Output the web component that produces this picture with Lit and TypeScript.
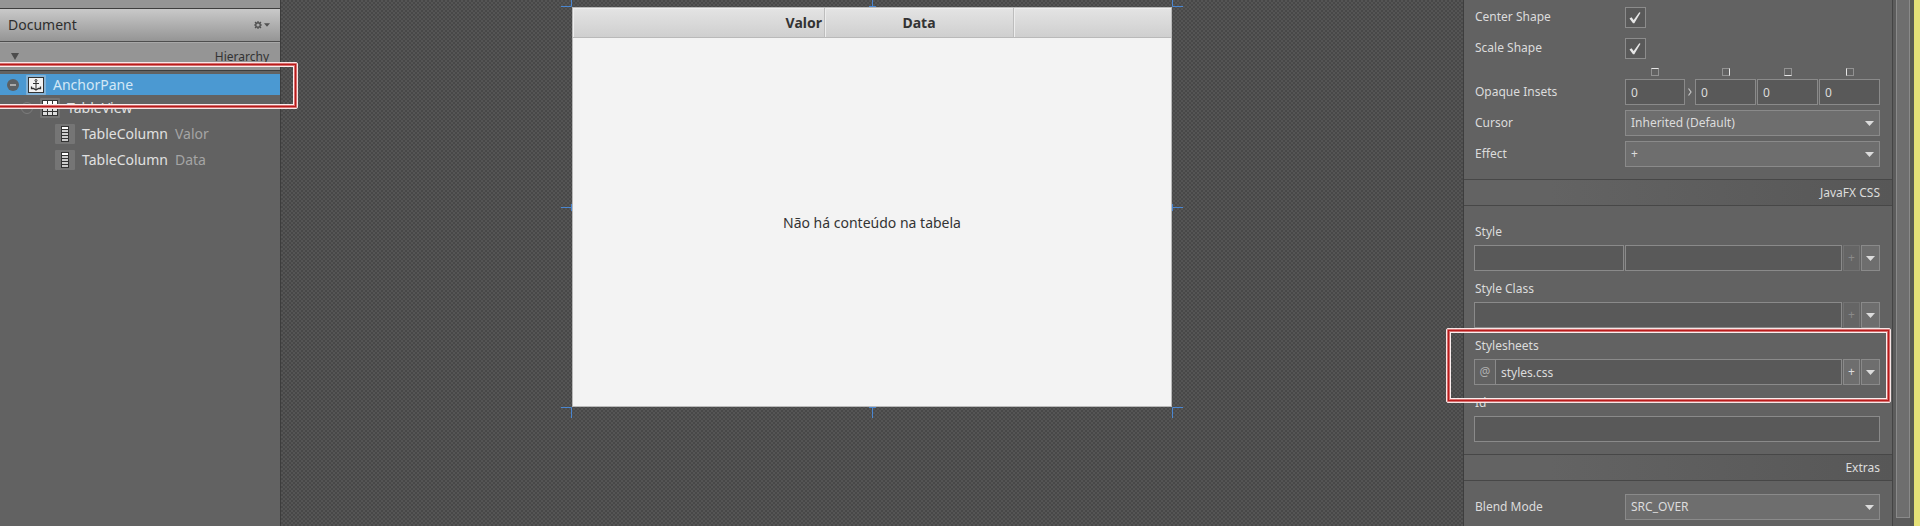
import { LitElement, html, css, svg } from "lit";
import { customElement } from "lit/decorators.js";

const icons = {
  anchor: svg`<rect x="2.5" y="2.5" width="15" height="15" fill="#f2f2f2" stroke="#333"/><g fill="none" stroke="#2f2f2f"><circle cx="10" cy="5.5" r="1" /><path d="M10 6.5V15M7 8.5h6"/><path d="M5.5 11.5v2h2l2.5 1.5 2.5-1.5h2v-2" stroke-width="1.3"/></g>`,
  table: svg`<rect x="2" y="2" width="16" height="16" fill="#333"/><path fill="#fff" d="M3 3h4v3H3zM8 3h4v3H8zM13 3h4v3h-4z"/><path fill="#ddd" d="M3 7h4v2H3zM8 7h4v2H8zM13 7h4v2h-4zM3 10h4v3H3zM8 10h4v3H8zM13 10h4v3h-4zM3 14h4v3H3zM8 14h4v3H8zM13 14h4v3h-4z"/>`,
  column: svg`<rect x="6" y="2" width="8" height="16" fill="#333"/><path fill="#fff" d="M7 3h6v2H7z"/><path fill="#ccc" d="M7 6h6v2H7zM7 9h6v2H7zM7 12h6v2H7zM7 15h6v2H7z"/>`,
};
const triangle = html`<svg class="tri" width="9" height="5" viewBox="0 0 9 5" aria-hidden="true"><path d="M0 0h9L4.5 5z" fill="currentColor"/></svg>`;

@customElement("app-root")
export class AppRoot extends LitElement {
  static styles = css`
    :host {
      display: flex;
      position: relative;
      height: 100vh;
      overflow: hidden;
      background: #626262;
      color: #dcdcdc;
      font-family: "Noto Sans", "Open Sans", sans-serif;
      font-size: 12px;
      line-height: 18px;
    }
    * { box-sizing: border-box; }
    svg { display: block; flex: none; }
    button, input, select { font: inherit; color: inherit; border-radius: 0; margin: 0; appearance: none; min-width: 0; outline: none; }
    .document { width: 281px; flex: none; border-right: 1px solid #3c3c3c; }
    .strip { height: 9px; background: #959595; border-bottom: 1px solid #3e3e3e; }
    .title { height: 33px; display: flex; align-items: center; justify-content: space-between; padding: 0 10px 0 8px; background: linear-gradient(#c9c9c9, #959595); border-bottom: 1px solid #4e4e4e; color: #2e2e2e; }
    .title h1 { margin: 0; font-size: 14px; font-weight: 400; line-height: 20px; }
    .gear { display: flex; align-items: center; gap: 2px; border: 0; padding: 0; background: none; color: #505050; }
    .gear .tri { width: 6px; height: 4px; }
    .section { height: 29px; display: flex; align-items: center; justify-content: space-between; padding: 0 11px; background: #959595; border-top: 1px solid #a8a8a8; border-bottom: 1px solid #3e3e3e; color: #333; }
    .tree { margin: 0; padding: 3px 0; list-style: none; font-size: 14px; line-height: 20px; color: #e0e0e0; }
    .node { display: flex; align-items: center; height: 26px; gap: 7px; }
    .node.selected { height: 21px; background: #4b99d2; color: #d3e8f6; }
    .l0 { padding-left: 7px; }
    .l1 { padding-left: 21px; }
    .l2 { padding-left: 55px; }
    .chip { background: #757575; border-radius: 1px; }
    .selected .chip { background: #83b2d6; }
    .hint { color: #a5a5a5; }

    .canvas {
      flex: 1;
      display: flex;
      justify-content: center;
      align-items: flex-start;
      padding-top: 7px;
      background: repeating-conic-gradient(#484848 0% 25%, #555 0% 50%) 0 0 / 4px 4px;
    }
    .stage { position: relative; width: 600px; height: 400px; display: flex; flex-direction: column; background: #f3f3f3; border: 1px solid #b9b9b9; color: #333; }
    .grid { width: 100%; border-collapse: separate; border-spacing: 0; table-layout: fixed; flex: none; }
    .grid th { height: 30px; padding: 0; border-bottom: 1px solid #b9b9b9; border-right: 1px solid #bdbdbd; background: linear-gradient(#e4e4e4, #cfcfcf); box-shadow: inset 1px 1px #ededed; font-size: 14px; font-weight: 700; line-height: 18px; }
    .grid th:last-child { border-right: 0; }
    .grid .valor { width: 252px; text-align: right; padding-right: 2px; }
    .grid .data { width: 189px; }
    .empty { flex: 1; display: flex; align-items: center; justify-content: center; font-size: 14px; padding-top: 2px; margin: 0; }
    .handle { position: absolute; color: #4a86d0; }
    .n { top: -12px; } .s { bottom: -12px; } .w { left: -12px; } .e { right: -12px; }
    .cx { left: calc(50% - 5px); } .cy { top: calc(50% - 5px); }

    .inspector { width: 430px; flex: none; border-left: 1px solid #3e3e3e; border-right: 1px solid #444; }
    .block { display: grid; row-gap: 5px; padding: 0 12px 0 10px; }
    .block.top { padding-top: 4px; padding-bottom: 12px; }
    .row { display: grid; grid-template-columns: 151px 1fr; align-items: center; height: 26px; }
    .row > label, .row > .cap { padding-left: 1px; }
    .insets-row { height: 39px; align-items: end; }
    .insets-row .cap { line-height: 26px; }
    .check { width: 21px; height: 21px; border: 1px solid #8c8c8c; background: #595959 url("data:image/svg+xml,%3Csvg xmlns='http://www.w3.org/2000/svg' viewBox='0 0 19 19'%3E%3Cpath d='M3.5 10.5l2-1.2 2.2 2.7 5.6-7.8 1.2.6-6.2 10.5H7z' fill='%23e6e6e6'/%3E%3C/svg%3E"); }
    .insets { display: grid; grid-template-columns: 60px 8px repeat(3, 1fr); gap: 3px 1px; }
    .mark { width: 8px; height: 8px; border: 1px solid #929292; justify-self: center; }
    .mt { border-top-color: #e5e5e5; } .mr { border-right-color: #e5e5e5; } .mb { border-bottom-color: #e5e5e5; } .ml { border-left-color: #e5e5e5; }
    .chev { align-self: center; justify-self: center; }
    .field { width: 100%; height: 26px; border: 1px solid #8a8a8a; background: #595959; padding: 0 5px; }
    .select { position: relative; display: grid; }
    .select select { width: 100%; height: 26px; border: 1px solid #8a8a8a; background: #6e6e6e; padding: 0 5px; }
    .select .tri { position: absolute; right: 6px; top: 11px; pointer-events: none; }
    .bar { height: 27px; display: flex; align-items: center; justify-content: flex-end; margin: 0; padding: 0 12px; border: solid #474747; border-width: 1px 0; background: linear-gradient(90deg, #636363 20%, #575757); font-size: 12px; font-weight: 400; }
    .stack { display: grid; grid-template-columns: 1fr; row-gap: 4px; }
    .stack > label { padding-left: 1px; }
    .block.css { row-gap: 9px; padding-top: 17px; padding-bottom: 12px; }
    .line { display: flex; gap: 1px; }
    .key { width: 150px; }
    .flex1 { flex: 1; }
    .btn { display: flex; align-items: center; justify-content: center; height: 26px; width: 19px; flex: none; border: 1px solid #8a8a8a; background: #6e6e6e; padding: 0; }
    .plus { width: 17px; }
    .btn:disabled { color: #8a8a8a; border-color: #727272; background: #656565; }
    .at { width: 21px; border-right: 0; color: #b0b0b0; background: #626262; }
    .joined { display: flex; flex: 1; }
    .block.extras { padding-top: 13px; }

    .scroll { width: 21px; flex: none; display: flex; padding-left: 3px; background: #5c5c5c; border-right: 4px solid #5a5a52; }
    .thumb { width: 14px; height: calc(100% - 8px); border: solid #8a8a8a; border-width: 0 1px 1px; background: #6e6e6e; }
    .edge { width: 6px; flex: none; background: #e5e077; }

    .mark-box { position: absolute; border: 1px solid #f8e6e6; border-radius: 2px; box-shadow: inset 0 0 0 1px #d87070, inset 0 0 0 2px #b81a1a, inset 0 0 0 3px #d87070, inset 0 0 0 4px #fbeeee; pointer-events: none; }
    .hl-tree { left: -6px; top: 62px; width: 304px; height: 47px; }
    .hl-css { right: 29px; top: 328px; width: 445px; height: 75px; }
  `;

  private selectBox(id: string, label: string, value: string) {
    return html`<div class="row"><label for=${id}>${label}</label><div class="select"><select id=${id}><option>${value}</option></select>${triangle}</div></div>`;
  }

  private buttons(label: string, disabled: boolean) {
    return html`<button class="btn plus" aria-label="Add ${label}" ?disabled=${disabled}>+</button><button class="btn" aria-label="${label} options">${triangle}</button>`;
  }

  private handle(pos: string, d: string) {
    return html`<svg class="handle ${pos}" width="11" height="11" viewBox="0 0 11 11" aria-hidden="true"><path d=${d} stroke="currentColor" fill="none"/></svg>`;
  }

  render() {
    return html`
      <aside class="document">
        <div class="strip"></div>
        <div class="title"><h1>Document</h1>
          <button class="gear" aria-label="Document menu"><svg width="8" height="8" viewBox="0 0 8 8"><circle cx="4" cy="4" r="2.3" fill="none" stroke="currentColor" stroke-width="1.4"/><path d="M4 0v1M4 7v1M0 4h1M7 4h1M1 1l1 1M6 6l1 1M7 1L6 2M2 6L1 7" stroke="currentColor" stroke-width="1.2"/></svg>${triangle}</button>
        </div>
        <div class="section"><svg width="8" height="7" viewBox="0 0 8 7"><path d="M0 0h8L4 7z" fill="#4c4c4c"/></svg><span>Hierarchy</span></div>
        <ul class="tree">
          <li class="node l0 selected"><svg width="12" height="12" viewBox="0 0 12 12"><circle cx="6" cy="6" r="6" fill="#5c6063"/><path d="M3 6h6" stroke="#aaa" stroke-width="2"/></svg><svg class="chip" width="20" height="20">${icons.anchor}</svg><span>AnchorPane</span></li>
          <li class="node l1"><svg width="12" height="12" viewBox="0 0 12 12"><circle cx="6" cy="6" r="5.5" fill="none" stroke="#7c7c7c"/></svg><svg class="chip" width="20" height="20">${icons.table}</svg><span>TableView</span></li>
          <li class="node l2"><svg class="chip" width="20" height="20">${icons.column}</svg><span>TableColumn</span><span class="hint">Valor</span></li>
          <li class="node l2"><svg class="chip" width="20" height="20">${icons.column}</svg><span>TableColumn</span><span class="hint">Data</span></li>
        </ul>
      </aside>
      <main class="canvas">
        <div class="stage">
          <table class="grid"><thead><tr><th class="valor">Valor</th><th class="data">Data</th><th></th></tr></thead></table>
          <p class="empty">Não há conteúdo na tabela</p>
          ${this.handle("n w", "M0 10.5h10.5V0")}${this.handle("n cx", "M2 10.5h7M5.5 0v10")}${this.handle("n e", "M11 10.5H.5V0")}
          ${this.handle("w cy", "M0 5.5h10M10.5 2v7")}${this.handle("e cy", "M11 5.5H1M.5 2v7")}
          ${this.handle("s w", "M0 .5h10.5V11")}${this.handle("s cx", "M2 .5h7M5.5 0v11")}${this.handle("s e", "M11 .5H.5V11")}
        </div>
      </main>
      <section class="inspector">
        <div class="block top">
          <div class="row"><label for="center">Center Shape</label><input id="center" class="check" type="checkbox" checked></div>
          <div class="row"><label for="scale">Scale Shape</label><input id="scale" class="check" type="checkbox" checked></div>
          <div class="row insets-row"><span class="cap">Opaque Insets</span>
            <div class="insets">
              <i class="mark mt"></i><i></i><i class="mark mr"></i><i class="mark mb"></i><i class="mark ml"></i>
              <input class="field" aria-label="Top" value="0">
              <svg class="chev" width="4" height="8" viewBox="0 0 4 8"><path d="M.5.5l2.5 3.5L.5 7.5" fill="none" stroke="#c4c4c4" stroke-width="1.2"/></svg>
              <input class="field" aria-label="Right" value="0"><input class="field" aria-label="Bottom" value="0"><input class="field" aria-label="Left" value="0">
            </div>
          </div>
          ${this.selectBox("cursor", "Cursor", "Inherited (Default)")}
          ${this.selectBox("effect", "Effect", "+")}
        </div>
        <h2 class="bar">JavaFX CSS</h2>
        <div class="block css">
          <div class="stack"><label for="style">Style</label><div class="line"><input id="style" class="field key"><input class="field flex1" aria-label="Style value">${this.buttons("Style", true)}</div></div>
          <div class="stack"><label for="cls">Style Class</label><div class="line"><input id="cls" class="field flex1">${this.buttons("Style Class", true)}</div></div>
          <div class="stack"><label for="sheets">Stylesheets</label><div class="line"><div class="joined"><button class="btn at">@</button><input id="sheets" class="field flex1" value="styles.css"></div>${this.buttons("Stylesheets", false)}</div></div>
          <div class="stack"><label for="fxid">Id</label><input id="fxid" class="field"></div>
        </div>
        <h2 class="bar">Extras</h2>
        <div class="block extras">${this.selectBox("blend", "Blend Mode", "SRC_OVER")}</div>
      </section>
      <div class="scroll"><div class="thumb"></div></div>
      <div class="edge"></div>
      <div class="mark-box hl-tree"></div>
      <div class="mark-box hl-css"></div>
    `;
  }
}
